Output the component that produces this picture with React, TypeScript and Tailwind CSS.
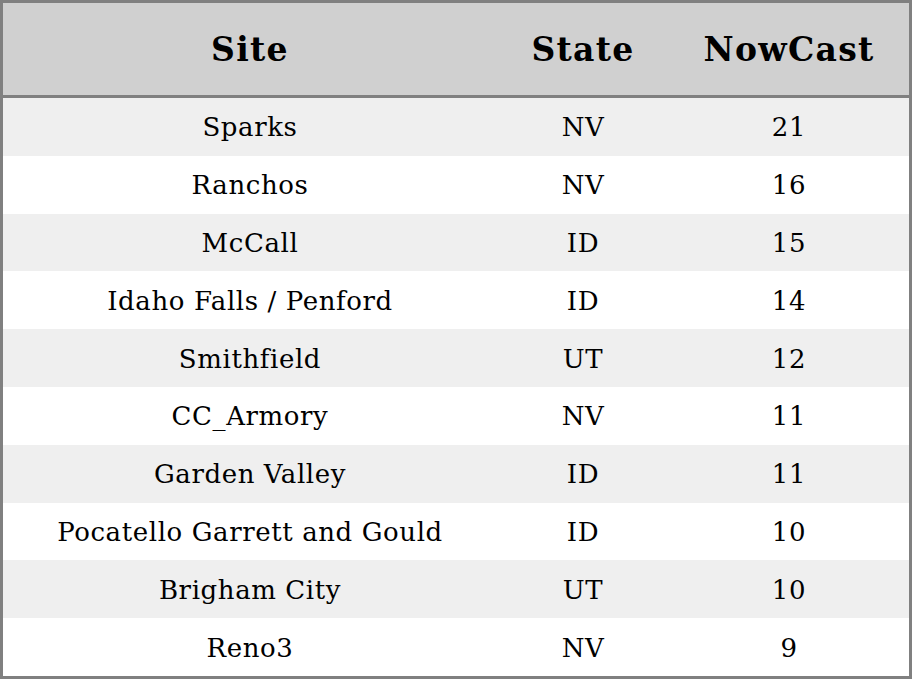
const rows: [string, string, number][] = [
  ['Sparks', 'NV', 21],
  ['Ranchos', 'NV', 16],
  ['McCall', 'ID', 15],
  ['Idaho Falls / Penford', 'ID', 14],
  ['Smithfield', 'UT', 12],
  ['CC_Armory', 'NV', 11],
  ['Garden Valley', 'ID', 11],
  ['Pocatello Garrett and Gould', 'ID', 10],
  ['Brigham City', 'UT', 10],
  ['Reno3', 'NV', 9],
]

export default function App() {
  return (
    <div className="w-[912px] h-[679px] bg-white font-['DejaVu_Serif',serif] text-black">
      <div className="h-full border-[3px] border-[#808080] flex flex-col">
        {/* header */}
        <div className="h-[95px] shrink-0 border-b-[3px] border-[#808080] bg-[#d0d0d0] grid grid-cols-[494px_172px_240px] items-center text-center text-[33px] tracking-[1.3px] font-bold pt-[1px]">
          <div>Site</div>
          <div>State</div>
          <div>NowCast</div>
        </div>
        {rows.map(([site, state, val], i) => (
          <div
            key={site}
            className={`flex-1 min-h-0 grid grid-cols-[494px_172px_240px] items-center text-center text-[26px] tracking-[0.6px] pt-[2px] ${i % 2 === 0 ? 'bg-[#efefef]' : 'bg-white'}`}
          >
            <div>{site}</div>
            <div>{state}</div>
            <div>{val}</div>
          </div>
        ))}
      </div>
    </div>
  )
}
